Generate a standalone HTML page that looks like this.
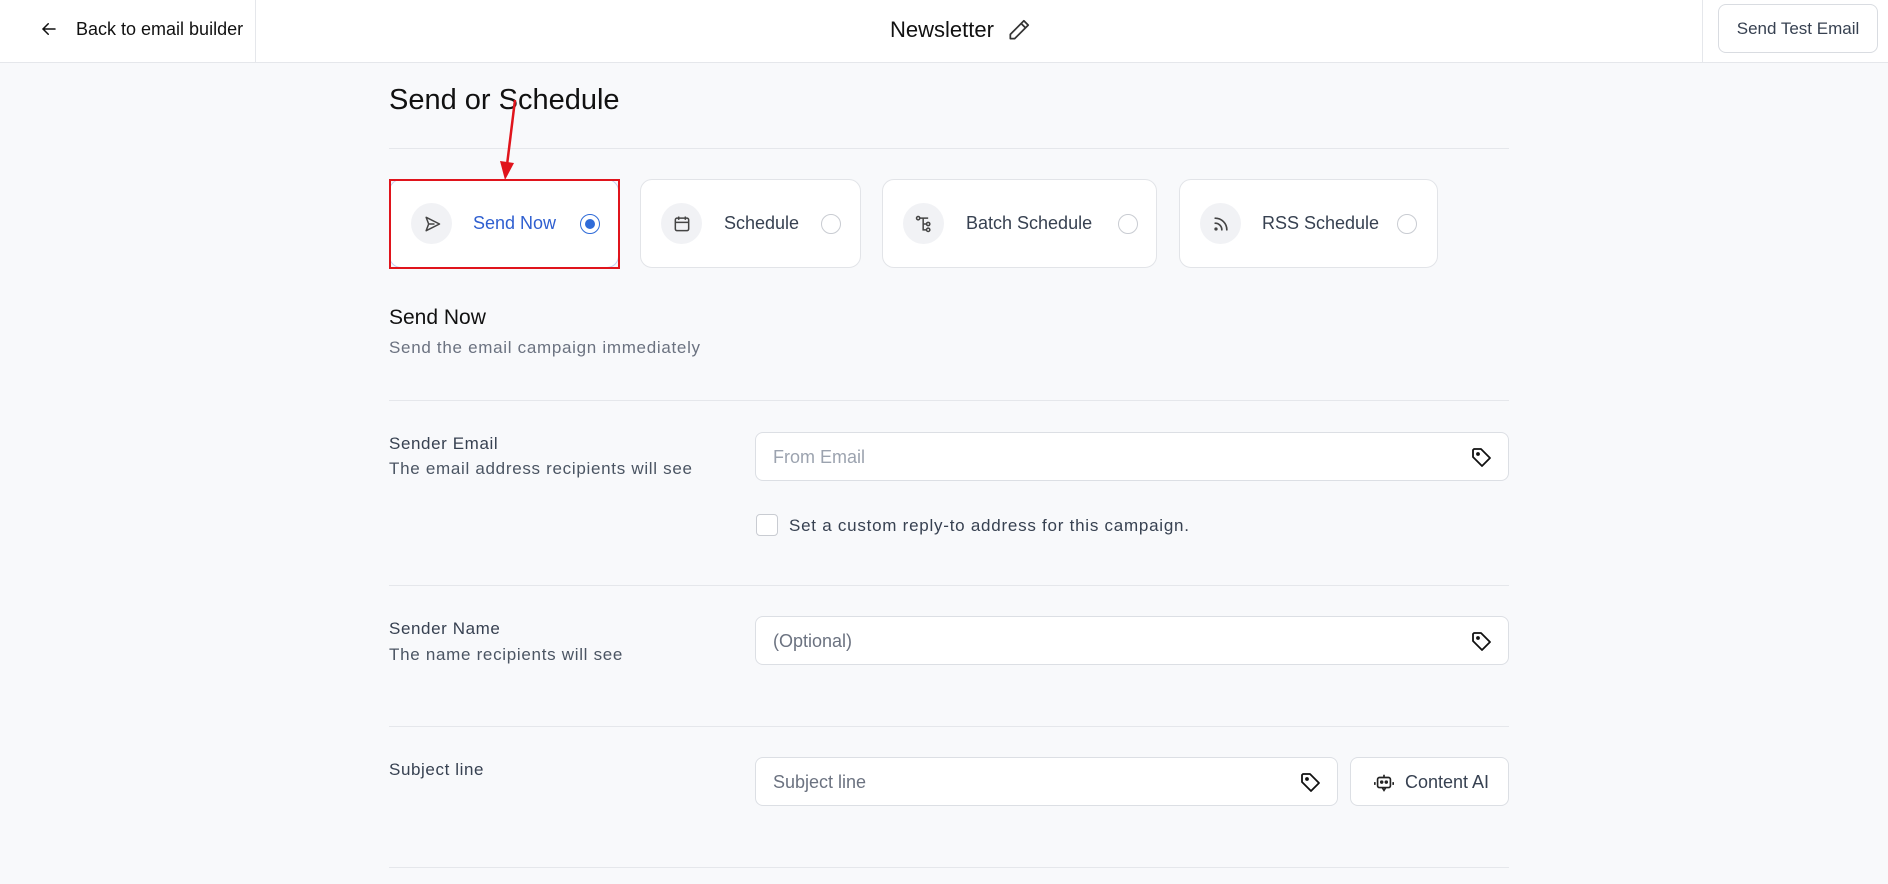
<!DOCTYPE html>
<html><head><meta charset="utf-8">
<style>
*{box-sizing:border-box;margin:0;padding:0}
body{width:1888px;height:884px;overflow:hidden;background:#f8f9fb;font-family:"Liberation Sans",sans-serif;color:#1f2937;position:relative}
.abs{position:absolute}
.hdr{left:0;top:0;width:1888px;height:63px;background:#fff;border-bottom:1px solid #e5e7eb}
.hr{left:389px;width:1120px;height:1px;background:#e5e7eb}
.card{top:179px;height:89px;background:#fff;border:1px solid #e2e4e8;border-radius:12px}
.ic{top:23px;width:41px;height:41px;border-radius:50%;background:#f1f2f5;display:flex;align-items:center;justify-content:center}
.lbl{top:33px;font-size:18px;color:#374151}
.radio{top:34px;width:20px;height:20px;border-radius:50%;border:1px solid #c9ccd2;background:#fff}
.input{background:#fff;border:1px solid #dcdfe4;border-radius:8px;height:49px}
.ph{font-size:18px;color:#9ca3af;position:absolute;left:17px;top:14px}
.tag{position:absolute;right:14px;top:13px}
.l1{font-size:17px;color:#374151;letter-spacing:.6px}
.l2{font-size:17px;color:#4b5563;letter-spacing:.7px}
</style></head><body>
<div class="abs hdr"></div>
<div class="abs" style="left:255px;top:0;width:1px;height:63px;background:#e5e7eb"></div>
<div class="abs" style="left:1702px;top:0;width:1px;height:63px;background:#e5e7eb"></div>
<svg class="abs" style="left:40px;top:20px" width="18" height="18" viewBox="0 0 24 24" fill="none" stroke="#111" stroke-width="2" stroke-linecap="round"><path d="M20 12H5M11 5l-7 7 7 7"/></svg>
<div class="abs" style="left:76px;top:19px;font-size:18px;color:#111">Back to email builder</div>
<div class="abs" style="left:890px;top:17px;font-size:22px;color:#111">Newsletter</div>
<svg class="abs" style="left:1006px;top:17px" width="26" height="26" viewBox="0 0 24 24" fill="none" stroke="#333" stroke-width="1.6" stroke-linejoin="round"><path d="M16.5 3.5l4 4L8 20H4v-4z M14 6l4 4"/></svg>
<div class="abs" style="left:1718px;top:4px;width:160px;height:49px;background:#fff;border:1px solid #d9dce1;border-radius:8px;font-size:17px;color:#374151;text-align:center;line-height:47px">Send Test Email</div>

<div class="abs" style="left:389px;top:84px;font-size:29px;color:#111">Send or Schedule</div>
<div class="abs hr" style="top:148px"></div>

<div class="abs card" style="left:389px;width:230px;border-color:#c7d0f0">
 <div class="abs ic" style="left:21px"><svg width="20" height="20" viewBox="0 0 24 24" fill="none" stroke="#444" stroke-width="1.8" stroke-linejoin="round"><path d="M5 4l16 8-16 8 3-8z M8 12h7"/></svg></div>
 <div class="abs lbl" style="left:83px;color:#2f5fd0">Send Now</div>
 <div class="abs radio" style="left:190px;border-color:#2f6bd8"><div style="margin:4px;width:10px;height:10px;border-radius:50%;background:#2f6bd8"></div></div>
</div>
<div class="abs" style="left:389px;top:179px;width:231px;height:90px;border:2px solid #e0141c"></div>
<svg class="abs" style="left:495px;top:95px" width="30" height="90" viewBox="0 0 30 90"><line x1="20" y1="5" x2="12" y2="70" stroke="#e0141c" stroke-width="2.5"/><polygon points="5,66 19,68 10,85" fill="#e0141c"/></svg>

<div class="abs card" style="left:640px;width:221px">
 <div class="abs ic" style="left:20px"><svg width="20" height="20" viewBox="0 0 24 24" fill="none" stroke="#444" stroke-width="1.8"><rect x="4" y="5" width="16" height="15" rx="2"/><path d="M4 10h16M8 3v4M16 3v4"/></svg></div>
 <div class="abs lbl" style="left:83px">Schedule</div>
 <div class="abs radio" style="left:180px"></div>
</div>
<div class="abs card" style="left:882px;width:275px">
 <div class="abs ic" style="left:20px"><svg width="20" height="20" viewBox="0 0 24 24" fill="none" stroke="#444" stroke-width="1.8"><circle cx="5" cy="5" r="2"/><circle cx="17" cy="12" r="2"/><circle cx="17" cy="19" r="2"/><path d="M7 5h10M11 5v14h4M11 12h4"/></svg></div>
 <div class="abs lbl" style="left:83px">Batch Schedule</div>
 <div class="abs radio" style="left:235px"></div>
</div>
<div class="abs card" style="left:1179px;width:259px">
 <div class="abs ic" style="left:20px"><svg width="20" height="20" viewBox="0 0 24 24" fill="none" stroke="#444" stroke-width="2" stroke-linecap="round"><path d="M5 11a8 8 0 018 8M5 5a14 14 0 0114 14"/><circle cx="6" cy="18" r="1" fill="#444"/></svg></div>
 <div class="abs lbl" style="left:82px">RSS Schedule</div>
 <div class="abs radio" style="left:217px"></div>
</div>

<div class="abs" style="left:389px;top:306px;font-size:21px;color:#111">Send Now</div>
<div class="abs l2" style="left:389px;top:338px;color:#6b7280">Send the email campaign immediately</div>
<div class="abs hr" style="top:400px"></div>

<div class="abs l1" style="left:389px;top:434px">Sender Email</div>
<div class="abs l2" style="left:389px;top:459px">The email address recipients will see</div>
<div class="abs input" style="left:755px;top:432px;width:754px"><span class="ph">From Email</span>
<svg class="tag" width="24" height="24" viewBox="0 0 24 24" fill="none" stroke="#111" stroke-width="1.8" stroke-linejoin="round"><path d="M3 4v7l9 9 8-8-9-9H4z"/><circle cx="8" cy="8" r="1" fill="#111"/></svg></div>
<div class="abs" style="left:756px;top:514px;width:22px;height:22px;border:1px solid #c9ccd2;border-radius:4px;background:#fff"></div>
<div class="abs l1" style="left:789px;top:516px;letter-spacing:.75px">Set a custom reply-to address for this campaign.</div>
<div class="abs hr" style="top:585px"></div>

<div class="abs l1" style="left:389px;top:619px">Sender Name</div>
<div class="abs l2" style="left:389px;top:645px">The name recipients will see</div>
<div class="abs input" style="left:755px;top:616px;width:754px"><span class="ph" style="color:#6b7280">(Optional)</span>
<svg class="tag" width="24" height="24" viewBox="0 0 24 24" fill="none" stroke="#111" stroke-width="1.8" stroke-linejoin="round"><path d="M3 4v7l9 9 8-8-9-9H4z"/><circle cx="8" cy="8" r="1" fill="#111"/></svg></div>
<div class="abs hr" style="top:726px"></div>

<div class="abs l1" style="left:389px;top:760px">Subject line</div>
<div class="abs input" style="left:755px;top:757px;width:583px"><span class="ph" style="color:#6b7280">Subject line</span>
<svg class="tag" width="24" height="24" viewBox="0 0 24 24" fill="none" stroke="#111" stroke-width="1.8" stroke-linejoin="round"><path d="M3 4v7l9 9 8-8-9-9H4z"/><circle cx="8" cy="8" r="1" fill="#111"/></svg></div>
<div class="abs input" style="left:1350px;top:757px;width:159px">
<svg class="abs" style="left:22px;top:14px" width="22" height="22" viewBox="0 0 24 24" fill="none" stroke="#222" stroke-width="1.8"><rect x="5" y="6" width="14" height="11" rx="2"/><path d="M12 3v3M2 11v3M22 11v3M10 17l2 3 2-3"/><circle cx="9.5" cy="11" r="1" fill="#222"/><circle cx="14.5" cy="11" r="1" fill="#222"/></svg>
<span class="abs" style="left:54px;top:14px;font-size:18px;color:#374151">Content AI</span></div>
<div class="abs hr" style="top:867px"></div>
</body></html>
